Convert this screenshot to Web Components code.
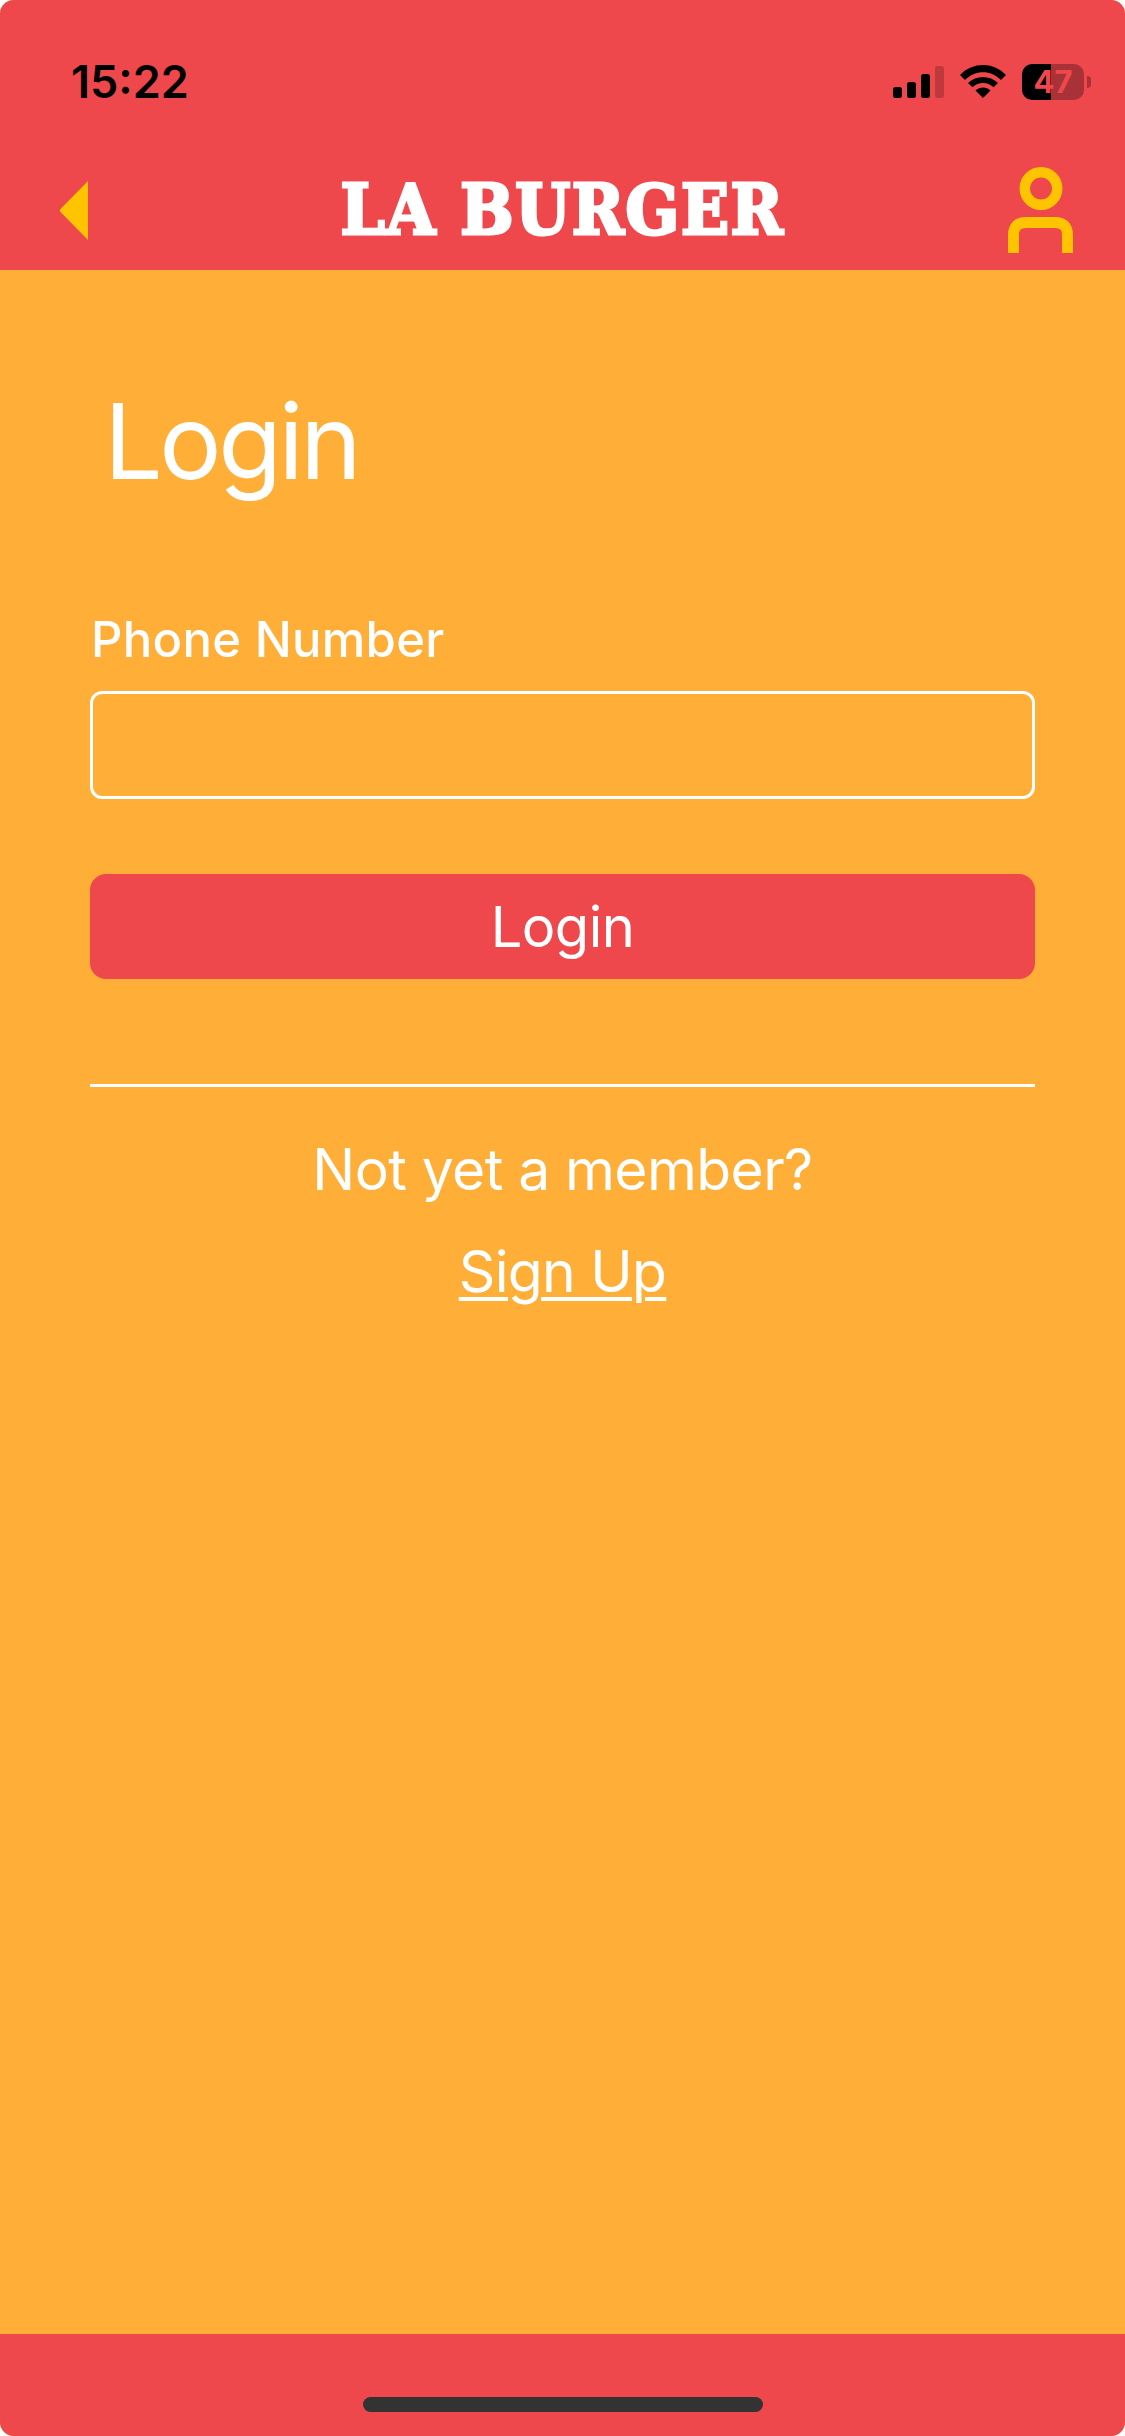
<!doctype html>
<html lang="en">
<head>
<meta charset="utf-8">
<title>LA BURGER</title>
<style>
  html, body { margin: 0; padding: 0; background: #fff; }
  body { font-family: Inter, "Liberation Sans", sans-serif; color: #fff; }
</style>
</head>
<body>
<app-shell>
  <status-bar time="15:22" battery="47"></status-bar>
  <top-nav>LA BURGER</top-nav>
  <login-form></login-form>
  <home-bar></home-bar>
</app-shell>

<script>
;(() => {
  const RED = '#ee484c'
  const ORANGE = '#ffae38'
  const YELLOW = '#ffc400'

  class AppShell extends HTMLElement {
    constructor() {
      super()
      this.attachShadow({ mode: 'open' })
      this.shadowRoot.innerHTML = `
        <style>
          :host {
            display: flex;
            flex-direction: column;
            width: 1125px;
            height: 2436px;
            overflow: hidden;
            border-radius: 14px;
            background: ${ORANGE};
          }
        </style>
        <slot></slot>
      `
    }
  }

  class StatusBar extends HTMLElement {
    constructor() {
      super()
      this.attachShadow({ mode: 'open' })
      this.shadowRoot.innerHTML = `
        <style>
          :host {
            display: flex;
            align-items: center;
            justify-content: space-between;
            box-sizing: border-box;
            height: 150px;
            padding: 13px 34px 0 71px;
            background: ${RED};
            color: #000;
          }
          .time {
            font-size: 45px;
            font-weight: 600;
            line-height: 1;
          }
          .icons {
            display: flex;
            align-items: center;
            gap: 16px;
          }
          svg { display: block; }
          .battery {
            position: relative;
            display: flex;
            align-items: center;
            justify-content: center;
            width: 62px;
            height: 36px;
            border-radius: 10px;
            overflow: hidden;
            background: linear-gradient(90deg, #000 0 29px, #a83238 29px);
            color: ${RED};
            font-size: 31px;
            font-weight: 700;
            line-height: 1;
          }
          .cell { display: flex; align-items: center; gap: 3px; }
          .tip {
            width: 4px;
            height: 12px;
            border-radius: 0 6px 6px 0;
            background: #a83238;
          }
        </style>
        <span class="time"></span>
        <div class="icons">
          <svg width="51" height="32" viewBox="0 0 51 32">
            <rect x="0" y="21" width="9" height="11" rx="2.5"/>
            <rect x="14" y="16" width="9" height="16" rx="2.5"/>
            <rect x="28" y="8" width="9" height="24" rx="2.5"/>
            <rect x="42" y="0" width="9" height="32" rx="2.5" fill="#000" opacity=".2"/>
          </svg>
          <svg width="46" height="33" viewBox="0 0 46 33">
            <path d="M23 33 L15.5 25.5 C19.5 21.5 26.5 21.5 30.5 25.5 Z"/>
            <path d="M12.4 22.3 L8 18 C16 10 30 10 38 18 L33.6 22.3 C27.6 16.5 18.4 16.5 12.4 22.3 Z"/>
            <path d="M5 15 L0 10 C12.5 -3.3 33.5 -3.3 46 10 L41 15 C31 4.6 15 4.6 5 15 Z"/>
          </svg>
          <div class="cell">
            <div class="battery"></div>
            <div class="tip"></div>
          </div>
        </div>
      `
    }

    connectedCallback() {
      this.shadowRoot.querySelector('.time').textContent = this.getAttribute('time')
      this.shadowRoot.querySelector('.battery').textContent = this.getAttribute('battery')
    }
  }

  class TopNav extends HTMLElement {
    constructor() {
      super()
      this.attachShadow({ mode: 'open' })
      this.shadowRoot.innerHTML = `
        <style>
          :host {
            display: grid;
            grid-template-columns: 1fr auto 1fr;
            align-items: center;
            box-sizing: border-box;
            height: 120px;
            padding: 0 52px 0 59px;
            background: ${RED};
          }
          .logo {
            margin-right: 7px;
            font-family: "DejaVu Serif Condensed", "DejaVu Serif", "Liberation Serif", serif;
            font-size: 70px;
            font-weight: 700;
            line-height: 1;
            letter-spacing: 1.6px;
            white-space: nowrap;
            color: #fff;
            -webkit-text-stroke: 3px #fff;
          }
          .user { justify-self: end; }
          svg { display: block; }
        </style>
        <svg width="30" height="60" viewBox="0 0 30 60">
          <path d="M29 1 V60 L1.5 32 Q0 30.5 1.5 29 Z" fill="${YELLOW}"/>
        </svg>
        <span class="logo"><slot></slot></span>
        <svg class="user" width="65" height="86" viewBox="0 0 65 86">
          <circle cx="33" cy="21.5" r="16.2" fill="none" stroke="${YELLOW}" stroke-width="10.5"/>
          <path d="M5.5 86 V68 Q5.5 55.500 18 55.500 H47 Q59.500 55.500 59.500 68 V86" fill="none" stroke="${YELLOW}" stroke-width="11"/>
        </svg>
      `
    }
  }

  class LoginForm extends HTMLElement {
    constructor() {
      super()
      this.attachShadow({ mode: 'open' })
      this.shadowRoot.innerHTML = `
        <style>
          :host {
            display: flex;
            flex-direction: column;
            flex: 1;
            box-sizing: border-box;
            padding: 0 90px;
            color: #fff;
          }
          h1 {
            margin: 110px 0 0 14px;
            font-size: 104px;
            font-weight: 400;
            line-height: 122px;
            letter-spacing: -3.5px;
          }
          label {
            display: block;
            margin-top: 109px;
            margin-left: 1px;
            font-size: 49px;
            font-weight: 450;
            line-height: 57px;
            letter-spacing: 0.3px;
          }
          input {
            display: block;
            box-sizing: border-box;
            width: 100%;
            height: 108px;
            margin-top: 23px;
            border: 3px solid #fff;
            border-radius: 12px;
            background: transparent;
            outline: none;
          }
          button {
            display: block;
            width: 100%;
            height: 105px;
            margin-top: 75px;
            padding: 0;
            border: 0;
            border-radius: 16px;
            background: ${RED};
            color: #fff;
            font: 400 56px/1 Inter, "Liberation Sans", sans-serif;
            letter-spacing: -0.5px;
          }
          hr {
            width: 100%;
            height: 3px;
            margin: 105px 0 0;
            border: 0;
            background: #fff;
          }
          p {
            margin: 48px 0 0;
            text-align: center;
            font-size: 57px;
            line-height: 70px;
            letter-spacing: -0.6px;
          }
          a {
            display: block;
            margin-top: 32px;
            text-align: center;
            font-size: 57px;
            line-height: 70px;
            letter-spacing: -0.7px;
            color: #fff;
            text-decoration: underline;
            text-decoration-thickness: 4px;
            text-underline-offset: 5px;
          }
        </style>
        <h1>Login</h1>
        <label for="phone">Phone Number</label>
        <input id="phone" type="tel">
        <button type="button">Login</button>
        <hr>
        <p>Not yet a member?</p>
        <a href="#">Sign Up</a>
      `
    }
  }

  class HomeBar extends HTMLElement {
    constructor() {
      super()
      this.attachShadow({ mode: 'open' })
      this.shadowRoot.innerHTML = `
        <style>
          :host {
            display: flex;
            justify-content: center;
            box-sizing: border-box;
            height: 102px;
            padding-top: 63px;
            background: ${RED};
          }
          div {
            width: 400px;
            height: 15px;
            border-radius: 8px;
            background: #333;
          }
        </style>
        <div></div>
      `
    }
  }

  customElements.define('app-shell', AppShell)
  customElements.define('status-bar', StatusBar)
  customElements.define('top-nav', TopNav)
  customElements.define('login-form', LoginForm)
  customElements.define('home-bar', HomeBar)
})()
</script>
</body>
</html>
